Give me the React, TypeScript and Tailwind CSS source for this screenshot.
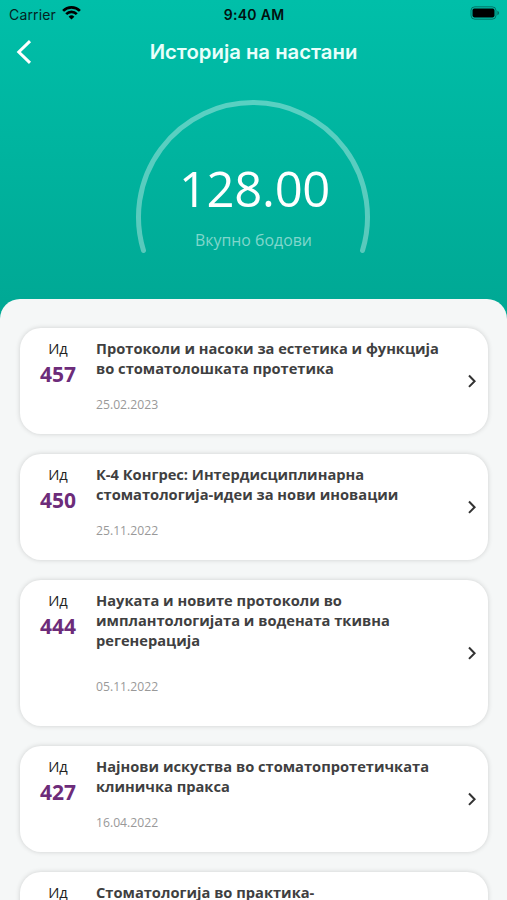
import React from "react";

type EventItem = { id?: string; title: string[]; date?: string; tall?: boolean };

const events: EventItem[] = [
  { id: "457", title: ["Протоколи и насоки за естетика и функција", "во стоматолошката протетика"], date: "25.02.2023" },
  { id: "450", title: ["К-4 Конгрес: Интердисциплинарна", "стоматологија-идеи за нови иновации"], date: "25.11.2022" },
  { id: "444", title: ["Науката и новите протоколи во", "имплантологијата и водената ткивна", "регенерација"], date: "05.11.2022", tall: true },
  { id: "427", title: ["Најнови искуства во стоматопротетичката", "клиничка пракса"], date: "16.04.2022" },
  { title: ["Стоматологија во практика-"] },
];

function StatusBar() {
  return (
    <div className="grid h-7 grid-cols-3 items-center pl-[9px] pr-[6px] font-['Inter','Liberation_Sans',sans-serif] text-[14px] text-[#04231f]">
      <div className="flex items-center gap-[6px]">
        <span className="tracking-[0.15px]">Carrier</span>
        <svg className="-mt-[2px]" width="19" height="14" viewBox="0 0 19 14" fill="none" stroke="#000" strokeWidth="2.7">
          <path d="M1.1 4.9a12 12 0 0 1 16.8 0" />
          <path d="M4.2 8.1a7.5 7.5 0 0 1 10.6 0" />
          <path d="M9.5 13.6 6.6 10.7a4.1 4.1 0 0 1 5.8 0Z" fill="#000" stroke="none" />
        </svg>
      </div>
      <span className="-ml-[2px] whitespace-nowrap text-center font-semibold tracking-[0.3px] text-[#02110f]">9:40 AM</span>
      <svg className="-mt-[2px] justify-self-end" width="31" height="14" viewBox="0 0 31 14">
        <rect x="1" y="0.8" width="25" height="12.4" rx="3.8" fill="none" stroke="#000" strokeOpacity=".38" />
        <rect x="2.5" y="2.6" width="22" height="8.8" rx="1.8" fill="#000" />
        <path d="M27.4 4.8c2.2.8 2.2 3.6 0 4.4Z" fill="#000" fillOpacity=".42" />
      </svg>
    </div>
  );
}

function EventCard({ id, title, date, tall }: EventItem) {
  return (
    <article
      className={`flex shrink-0 rounded-[21px] bg-white pt-[10px] shadow-[0_0_5px_rgba(0,0,0,0.16)] ${tall ? "h-[146px]" : "h-[106px]"}`}
    >
      <div className="flex w-[76px] flex-col items-center">
        <span className="text-[14.67px] leading-[21px] text-[#222]">Ид</span>
        {id && <span className="mt-px text-[21px] font-bold leading-[28px] text-[#6d2c7a]">{id}</span>}
      </div>
      <div className="flex-1">
        <h2 className="text-[14.67px] font-bold leading-5 text-[#3f3f41]">
          {title.map((line) => (
            <span key={line} className="block whitespace-nowrap">
              {line}
            </span>
          ))}
        </h2>
        {date && (
          <p className={`text-[12.2px] leading-4 text-[#999] ${tall ? "mt-[29px]" : "mt-[19px]"}`}>{date}</p>
        )}
      </div>
      <svg className="-mt-[11px] mr-[10px] self-center" width="12" height="16" viewBox="0 0 12 16" fill="none" stroke="#333" strokeWidth="2">
        <path d="m3 2.5 5.6 5.7L3 13.9" />
      </svg>
    </article>
  );
}

export default function App() {
  return (
    <div className="flex h-[900px] w-full flex-col overflow-hidden bg-linear-to-b from-[#00bfa9] to-[#00a995] to-[300px] font-['Open_Sans','Noto_Sans',sans-serif]">
      <StatusBar />
      <header className="grid h-12 grid-cols-[48px_1fr_48px] items-center">
        <svg className="ml-[15px]" width="18" height="26" viewBox="0 0 18 26" fill="none" stroke="#fff" strokeWidth="3" strokeLinecap="butt">
          <path d="M15 2.2 3.8 13 15 23.8" />
        </svg>
        <h1 className="text-center font-['Inter','Liberation_Sans',sans-serif] text-[20.3px] font-semibold text-[#e9fffb]">
          Историја на настани
        </h1>
      </header>
      <section className="grid h-[223px] shrink-0 justify-items-center">
        <svg className="col-start-1 row-start-1 -ml-px mt-[20px]" width="240" height="160" viewBox="0 0 240 160" fill="none" stroke="#fff" strokeOpacity=".35" strokeWidth="5" strokeLinecap="round">
          <path d="M10.5 154.5A114.5 114.5 0 1 1 229.5 154.5" />
        </svg>
        <div className="col-start-1 row-start-1 flex flex-col items-center pt-[78px]">
          <strong className="ml-[2px] text-[49px] font-normal leading-[68px] tracking-[-0.3px] text-white">128.00</strong>
          <span className="mt-[8px] text-[15.9px] leading-5 text-[#80d7cc]">Вкупно бодови</span>
        </div>
      </section>
      <main className="flex min-h-0 flex-1 flex-col gap-5 overflow-hidden rounded-t-[20px] bg-[#f5f7f7] pl-5 pr-[19px] pt-[29px]">
        {events.map((event) => (
          <EventCard key={event.title[0]} {...event} />
        ))}
      </main>
    </div>
  );
}
